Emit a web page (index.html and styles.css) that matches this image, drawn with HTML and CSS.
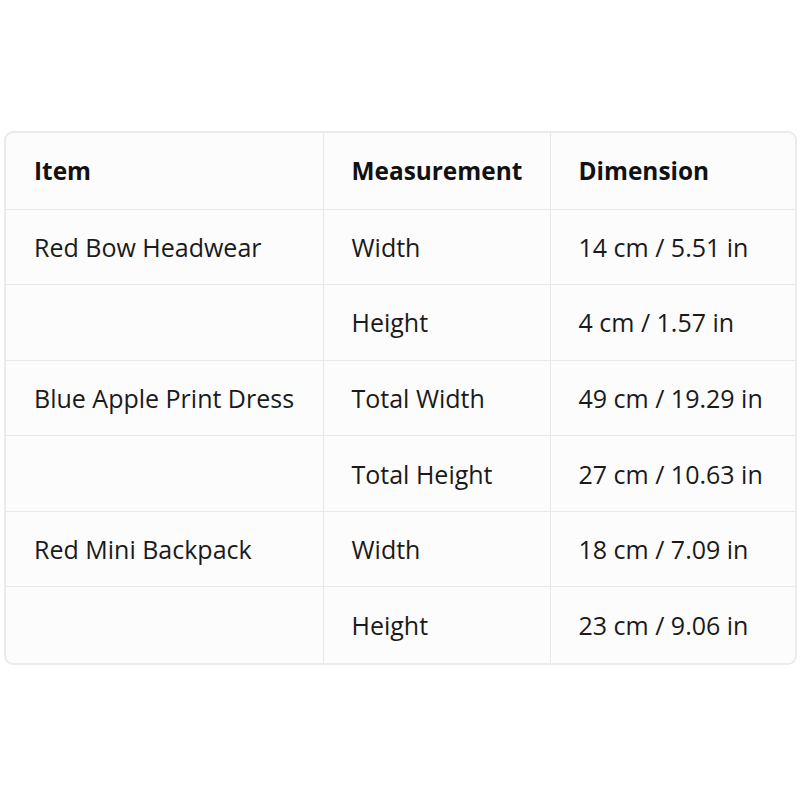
FILE: index.html
```html
<!DOCTYPE html>
<html>
<head>
<meta charset="utf-8">
<link rel="stylesheet" href="styles.css">
</head>
<body>
<div class="page">
  <div class="card">
    <table class="sizes">
      <thead>
        <tr><th class="c1">Item</th><th class="c2">Measurement</th><th class="c3">Dimension</th></tr>
      </thead>
      <tbody>
        <tr><td>Red Bow Headwear</td><td>Width</td><td>14 cm / 5.51 in</td></tr>
        <tr><td></td><td>Height</td><td>4 cm / 1.57 in</td></tr>
        <tr><td>Blue Apple Print Dress</td><td>Total Width</td><td>49 cm / 19.29 in</td></tr>
        <tr><td></td><td>Total Height</td><td>27 cm / 10.63 in</td></tr>
        <tr><td>Red Mini Backpack</td><td>Width</td><td>18 cm / 7.09 in</td></tr>
        <tr><td></td><td>Height</td><td>23 cm / 9.06 in</td></tr>
      </tbody>
    </table>
  </div>
</div>
</body>
</html>
```
FILE: styles.css
```css
html, body {
  margin: 0;
  padding: 0;
  background: #ffffff;
}
.page {
  padding: 131px 3px 0 4px;
}
.card {
  border: 2px solid #ebebeb;
  border-radius: 9px;
  overflow: hidden;
  background: #fcfcfc;
}
.sizes {
  width: 100%;
  border-collapse: collapse;
  font-family: "Open Sans", "Noto Sans", sans-serif;
  font-size: 25px;
  color: #1a1a1a;
}
.sizes th, .sizes td {
  height: 75.6px;
  padding: 0 0 0 28px;
  text-align: left;
  vertical-align: middle;
  border-left: 1px solid #e8e8e8;
  border-top: 1px solid #e8e8e8;
  box-sizing: border-box;
}
.sizes th:first-child, .sizes td:first-child {
  border-left: none;
}
.sizes thead th {
  height: 76px;
  border-top: none;
  font-weight: 700;
  font-size: 24.4px;
  color: #111111;
}
.c1 { width: 317px; }
.c2 { width: 227px; }
```
